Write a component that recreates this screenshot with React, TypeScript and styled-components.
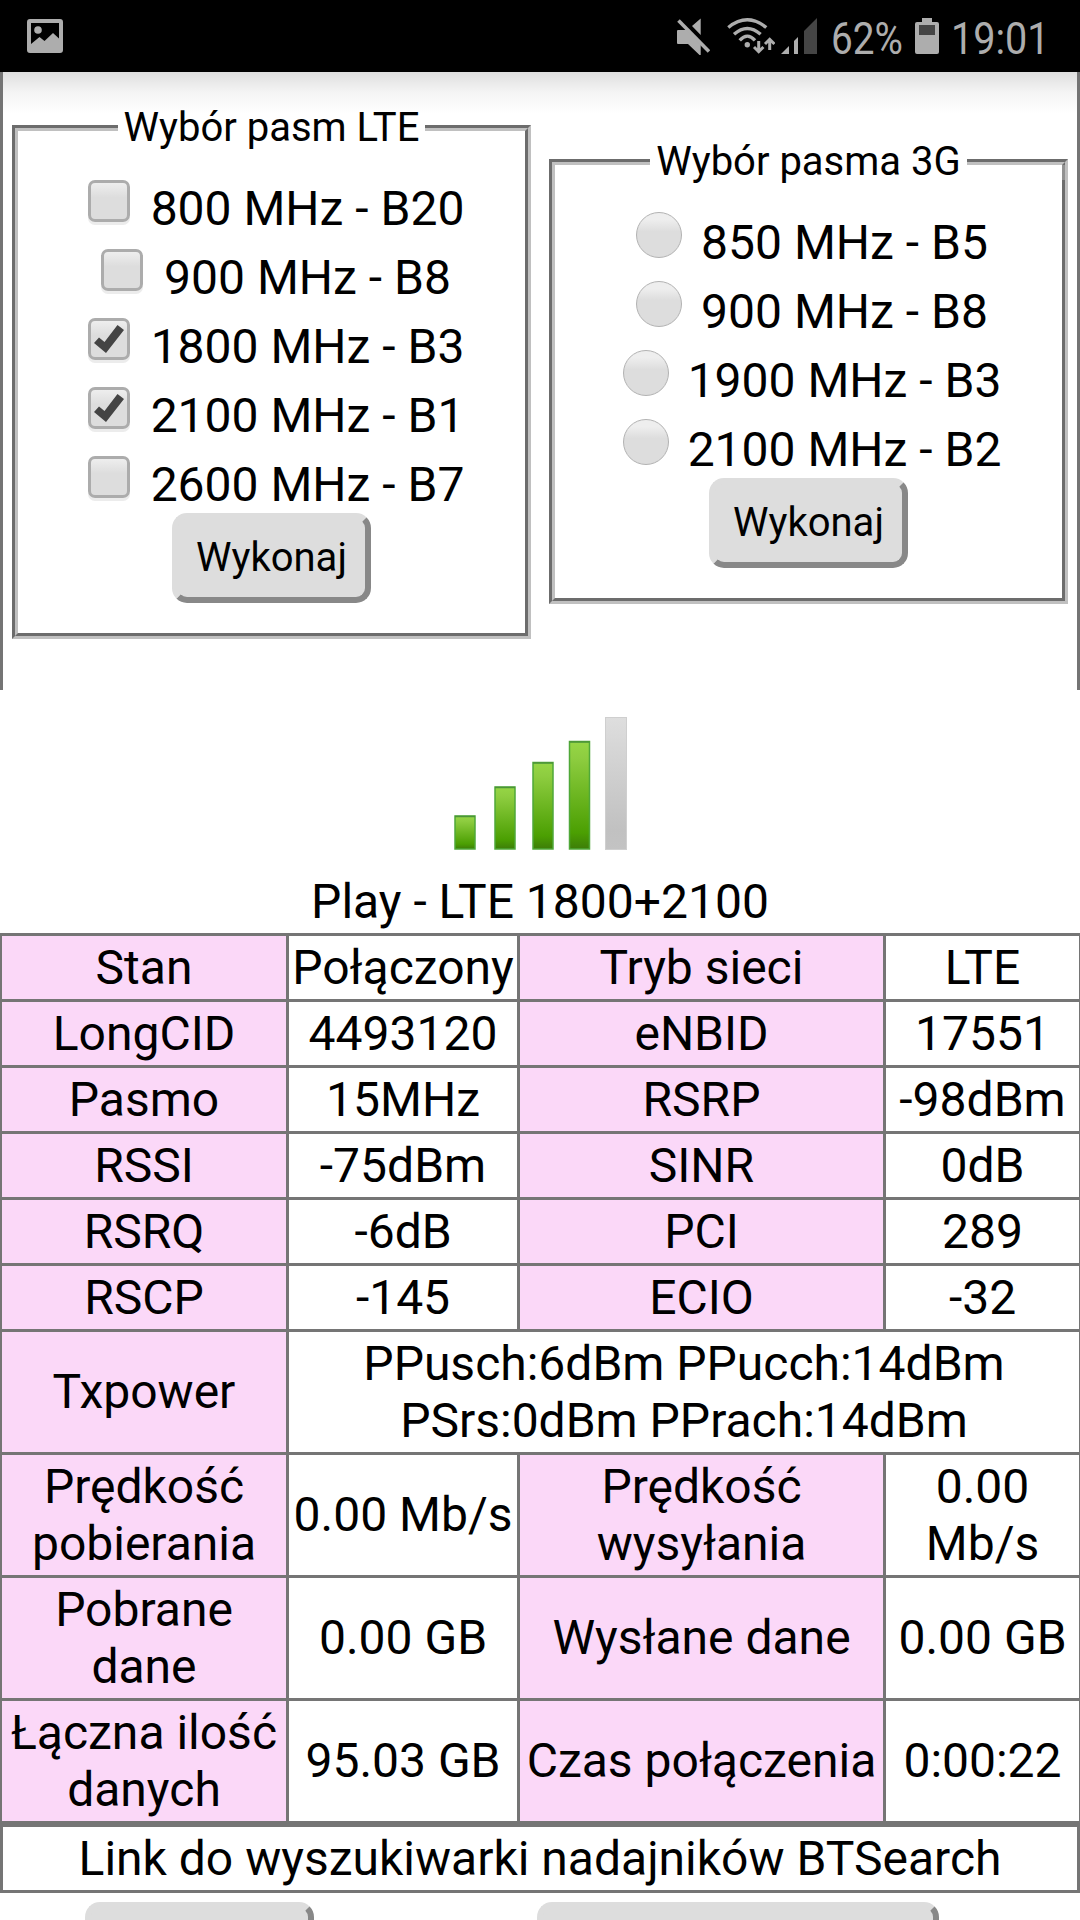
import React from "react";
import styled, { createGlobalStyle } from "styled-components";

const GlobalStyle = createGlobalStyle`
  *, *::before, *::after { box-sizing: border-box; }
  body {
    margin: 0;
    background: #fff;
    color: #000;
    font: 48px/57px Roboto, "Noto Sans", sans-serif;
  }
`;

const Screen = styled.div`
  width: 1080px;
  height: 1920px;
  overflow: hidden;
  background: #fff;
`;

const StatusBar = styled.header`
  height: 72px;
  padding: 0 27px;
  display: flex;
  align-items: center;
  justify-content: space-between;
  background: #000;
  color: #adadad;
  svg { display: block; flex: none; }
`;

const StatusGroup = styled.div`
  display: flex;
  align-items: center;
  height: 72px;
  width: 376px;
`;

const Spacer = styled.span<{ $width: number }>`
  flex: none;
  width: ${(p) => p.$width}px;
`;

const StatusText = styled.span<{ $width: number; $stretch: number }>`
  flex: none;
  width: ${(p) => p.$width}px;
  font-size: 45px;
  line-height: 52px;
  white-space: nowrap;
  transform: translateY(3px) scaleX(${(p) => p.$stretch});
  transform-origin: left center;
`;

const BandArea = styled.section`
  display: flex;
  justify-content: space-between;
  height: 618px;
  padding: 32px 9px 0 9px;
  border: solid #747474;
  border-width: 0 3px;
  background: linear-gradient(rgba(0, 0, 0, 0.13), rgba(0, 0, 0, 0.045) 20px, rgba(0, 0, 0, 0) 42px) no-repeat;
`;

const BandSet = styled.fieldset<{ $top: number; $height: number }>`
  position: relative;
  width: 519px;
  height: ${(p) => p.$height}px;
  margin: ${(p) => p.$top}px 0 0;
  padding: 17px 0 0;
  border: 6px groove #c0c0c0;
  text-align: center;
`;

const ScrollThumb = styled.span`
  position: absolute;
  top: -20px;
  right: -5px;
  width: 5px;
  height: 15px;
  background: rgba(190, 190, 190, 0.45);
`;

const Legend = styled.legend`
  margin: 0 auto;
  padding: 0 6px;
  font-size: 40px;
  line-height: 47px;
`;

const Option = styled.label<{ $shift?: number }>`
  display: flex;
  justify-content: center;
  height: 69px;
  padding: 12px ${(p) => p.$shift ?? 0}px 0 0;
  white-space: pre;
`;

const Check = styled.span`
  width: 42px;
  height: 42px;
  margin: 0 21px 0 9px;
  border: 3px solid #acacac;
  border-radius: 7px;
  background: linear-gradient(#eee, #ddd 40%, #ddd);
  box-shadow: 0 3px 0 #ececec;
  svg { display: block; margin: -3px; }
`;

const Radio = styled.span`
  width: 46px;
  height: 46px;
  margin: -2px 19px 0 9px;
  border: 1px solid #b2b2b2;
  border-radius: 50%;
  background: linear-gradient(#eee 15%, #ddd 42%, #ddd);
`;

const Button = styled.button<{ $width?: number }>`
  display: block;
  width: ${(p) => p.$width ?? 199}px;
  height: 90px;
  margin: 0 auto;
  padding: 0 0 2px;
  border: 6px solid;
  border-color: #ddd #888 #888 #ddd;
  border-radius: 15px;
  background: #ddd;
  color: #000;
  font: 40px/47px Roboto, "Noto Sans", sans-serif;
`;

const SignalPanel = styled.section`
  display: flex;
  flex-direction: column;
  align-items: center;
  height: 243px;
  padding-top: 27px;
  svg { display: block; }
`;

const NetworkName = styled.div`
  margin-top: 23px;
`;

const StatsGrid = styled.section`
  display: grid;
  grid-template-columns: 284px 228px 363px 193px;
  gap: 3px;
  padding: 3px 1px 3px 2px;
  background: #757575;
`;

const Cell = styled.div<{ $label?: boolean; $span?: number; $tall?: boolean }>`
  display: flex;
  align-items: center;
  justify-content: center;
  grid-column: span ${(p) => p.$span ?? 1};
  padding: 3px 0 ${(p) => (p.$tall ? 5 : 3)}px;
  background: ${(p) => (p.$label ? "#fbd8f8" : "#fff")};
  text-align: center;
  white-space: pre;
`;

const LinkRow = styled.div`
  height: 69px;
  padding-top: 3px;
  border: 3px solid #757575;
  text-align: center;
`;

const ActionRow = styled.div`
  display: flex;
  gap: 223px;
  padding: 9px 0 0 85px;
  button { margin: 0; }
`;

type Item = { text: string; label?: boolean; span?: number; tall?: boolean };

const stats: Item[] = [
  { text: "Stan", label: true }, { text: "Połączony" },
  { text: "Tryb sieci", label: true }, { text: "LTE" },
  { text: "LongCID", label: true }, { text: "4493120" },
  { text: "eNBID", label: true }, { text: "17551" },
  { text: "Pasmo", label: true }, { text: "15MHz" },
  { text: "RSRP", label: true }, { text: "-98dBm" },
  { text: "RSSI", label: true }, { text: "-75dBm" },
  { text: "SINR", label: true }, { text: "0dB" },
  { text: "RSRQ", label: true }, { text: "-6dB" },
  { text: "PCI", label: true }, { text: "289" },
  { text: "RSCP", label: true }, { text: "-145" },
  { text: "ECIO", label: true }, { text: "-32" },
  { text: "Txpower", label: true, tall: true },
  { text: "PPusch:6dBm PPucch:14dBm\nPSrs:0dBm PPrach:14dBm", span: 3 },
  { text: "Prędkość\npobierania", label: true }, { text: "0.00 Mb/s", tall: true },
  { text: "Prędkość\nwysyłania", label: true }, { text: "0.00\nMb/s" },
  { text: "Pobrane\ndane", label: true }, { text: "0.00 GB", tall: true },
  { text: "Wysłane dane", label: true, tall: true }, { text: "0.00 GB", tall: true },
  { text: "Łączna ilość\ndanych", label: true }, { text: "95.03 GB", tall: true },
  { text: "Czas połączenia", label: true, tall: true }, { text: "0:00:22", tall: true },
];

const lteBands = [
  { text: "800 MHz - B20", on: false },
  { text: "900 MHz - B8", on: false },
  { text: "1800 MHz - B3", on: true },
  { text: "2100 MHz - B1", on: true },
  { text: "2600 MHz - B7", on: false },
];

const umtsBands = ["850 MHz - B5", "900 MHz - B8", "1900 MHz - B3", "2100 MHz - B2"];

const PictureIcon = () => (
  <svg width="36" height="34" viewBox="0 0 36 34">
    <path fill="#adadad" fillRule="evenodd" d="M3 0H33Q36 0 36 3V31Q36 34 33 34H3Q0 34 0 31V3Q0 0 3 0ZM4 4V25L12.500 18L17.500 22L26 14L32 19.500V4Z" />
    <circle cx="11" cy="11" r="3.800" fill="#adadad" />
  </svg>
);

const MuteIcon = () => (
  <svg width="33" height="37" viewBox="0 0 33 37">
    <path fill="#adadad" d="M1 12H9.700L23.700 26V37H22.500L11 26H1Q0 26 0 25V13Q0 12 1 12ZM23.700 0.500V17L15 8Z" />
    <path stroke="#adadad" strokeWidth="3.600" d="M1.500 2.500L32 33.500" />
  </svg>
);

const WifiIcon = () => (
  <svg width="48" height="36" viewBox="0 0 48 36" fill="none" stroke="#adadad">
    <path strokeWidth="3.400" d="M1.300 9.500Q20.300-5.800 39.300 9.500M7 16.300Q20.300 4.500 33.600 16.300M12.700 22.300Q20.300 14 28 22.300" />
    <circle cx="20.300" cy="26.700" r="2.700" fill="#adadad" stroke="none" />
    <path strokeWidth="3" d="M31.700 23V33M27 29L31.700 33.700L36.400 29M42.700 32V22M38 26L42.700 21.300L47.400 26" />
  </svg>
);

const CellIcon = () => (
  <svg width="36" height="36" viewBox="0 0 36 36">
    <path fill="#adadad" d="M0 36L8 28V36ZM13 23L17 19V36H13Z" />
    <path fill="#454545" d="M23 13L36 0V36H23Z" />
  </svg>
);

const BatteryIcon = () => (
  <svg width="24" height="36" viewBox="0 0 24 36">
    <path fill="#adadad" d="M7 0H17V4H22Q24 4 24 6V34Q24 36 22 36H2Q0 36 0 34V6Q0 4 2 4H7Z" />
    <rect x="4" y="7" width="16" height="10" fill="#454545" />
  </svg>
);

const CheckMark = () => (
  <svg width="42" height="42" viewBox="0 0 42 42">
    <path fill="#444" d="M6 25L11 19.500L16.500 24L29.500 7L36 12L18 35Z" />
  </svg>
);

const bars = [
  { x: 0, y: 98 }, { x: 40, y: 69 }, { x: 78, y: 44.500 }, { x: 114.500, y: 23.500 },
];

const SignalBars = () => (
  <svg width="173" height="133" viewBox="0 0 173 133">
    <defs>
      <linearGradient id="live" x1="0" y1="0" x2="0" y2="1">
        <stop offset="0" stopColor="#96d645" />
        <stop offset="0.150" stopColor="#8ecd40" />
        <stop offset="0.850" stopColor="#4b9f02" />
        <stop offset="1" stopColor="#3d7d08" />
      </linearGradient>
      <linearGradient id="idle" x1="0" y1="0" x2="0" y2="1">
        <stop offset="0" stopColor="#dedede" />
        <stop offset="0.850" stopColor="#c1c1c1" />
        <stop offset="1" stopColor="#c3c3c3" />
      </linearGradient>
    </defs>
    {bars.map((b) => (
      <g key={b.x}>
        <rect x={b.x + 1} y={b.y + 1} width="20" height={131 - b.y} fill="url(#live)" stroke="#4fa838" strokeWidth="1.500" />
        <path d={`M${b.x + 1} ${b.y + 1.500}H${b.x + 21}`} stroke="#4c9438" strokeWidth="1.500" />
      </g>
    ))}
    <rect x="151.500" y="0.500" width="21" height="132" fill="url(#idle)" stroke="#cfcfcf" />
  </svg>
);

export default function App() {
  return (
    <Screen>
      <GlobalStyle />
      <StatusBar>
        <PictureIcon />
        <StatusGroup>
          <MuteIcon />
          <Spacer $width={17} />
          <WifiIcon />
          <Spacer $width={6} />
          <CellIcon />
          <Spacer $width={14} />
          <StatusText $width={71} $stretch={0.86}>62%</StatusText>
          <Spacer $width={13} />
          <BatteryIcon />
          <Spacer $width={12} />
          <StatusText $width={90} $stretch={0.88}>19:01</StatusText>
        </StatusGroup>
      </StatusBar>
      <BandArea>
        <BandSet $top={0} $height={535}>
          <Legend>Wybór pasm LTE</Legend>
          {lteBands.map((b) => (
            <Option key={b.text}>
              <Check>{b.on && <CheckMark />}</Check>
              <span>{b.text}</span>
            </Option>
          ))}
          <Button>Wykonaj</Button>
        </BandSet>
        <BandSet $top={34} $height={466}>
          <Legend>Wybór pasma 3G</Legend>
          {umtsBands.map((b) => (
            <Option key={b} $shift={2}>
              <Radio />
              <span>{b}</span>
            </Option>
          ))}
          <Button>Wykonaj</Button>
          <ScrollThumb />
        </BandSet>
      </BandArea>
      <SignalPanel>
        <SignalBars />
        <NetworkName>Play - LTE 1800+2100</NetworkName>
      </SignalPanel>
      <StatsGrid>
        {stats.map((s, i) => (
          <Cell key={i} $label={s.label} $span={s.span} $tall={s.tall}>{s.text}</Cell>
        ))}
      </StatsGrid>
      <LinkRow>Link do wyszukiwarki nadajników BTSearch</LinkRow>
      <ActionRow>
        <Button $width={229} />
        <Button $width={402} />
      </ActionRow>
    </Screen>
  );
}
